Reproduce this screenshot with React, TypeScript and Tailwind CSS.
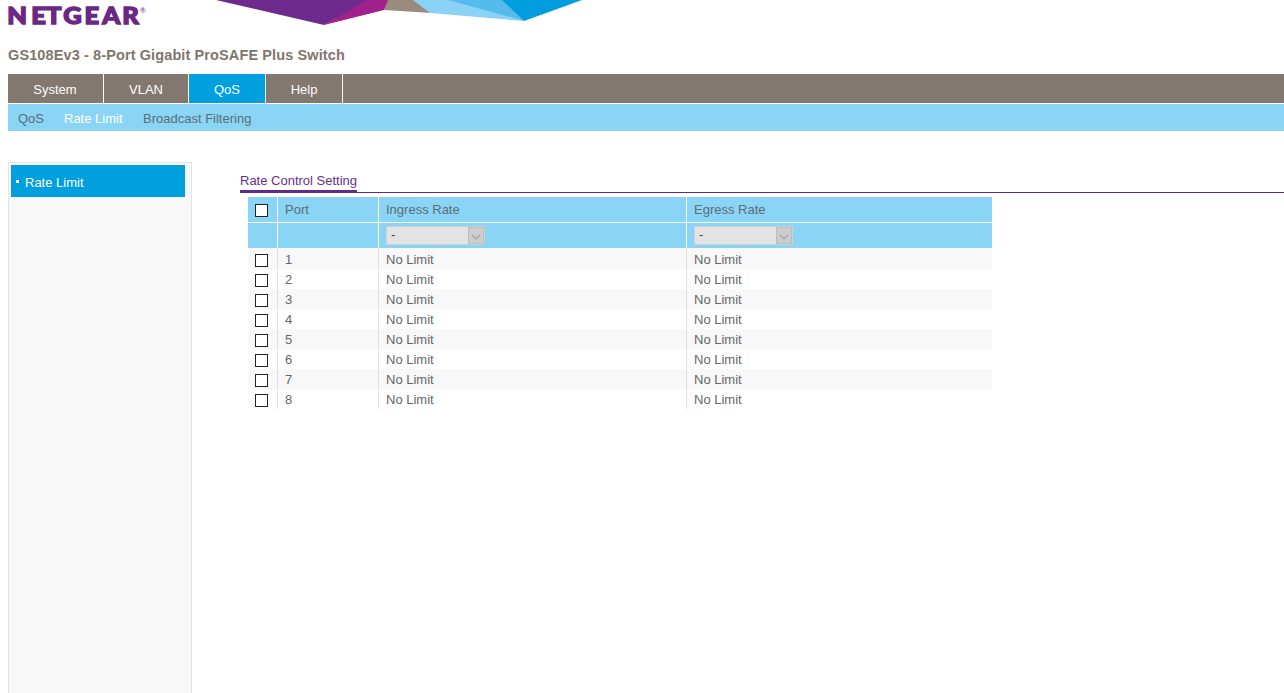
import { useState } from "react";

const TABS = [
  { label: "System", width: "w-[96px] pr-px" },
  { label: "VLAN", width: "w-[85px]" },
  { label: "QoS", width: "w-[77px]" },
  { label: "Help", width: "w-[77px]" },
];

const PORTS = [1, 2, 3, 4, 5, 6, 7, 8];

export default function App() {
  const [selected, setSelected] = useState<number[]>([]);

  function toggle(port: number) {
    setSelected((cur) =>
      cur.includes(port) ? cur.filter((p) => p !== port) : [...cur, port],
    );
  }

  const allSelected = selected.length === PORTS.length;

  return (
    <div className="flex h-[693px] flex-col overflow-hidden bg-white pl-2 font-['Liberation_Sans',Arial,sans-serif] text-[13px] leading-5 text-[#666]">
      <header className="flex h-[74px] flex-col">
        <div className="flex h-[45px] items-start">
          <Logo />
          <Banner />
        </div>
        <h1 className="text-[14.5px] leading-5 font-bold tracking-[0.11px] whitespace-nowrap text-[#80766d]">
          GS108Ev3 - 8-Port Gigabit ProSAFE Plus Switch
        </h1>
      </header>

      <nav className="flex h-[29px] shrink-0 bg-[#83786f] text-white">
        {TABS.map((tab) => (
          <button
            key={tab.label}
            className={`${tab.width} border-r border-white pt-[3px] ${
              tab.label === "QoS" ? "bg-[#00a0df]" : ""
            }`}
          >
            {tab.label}
          </button>
        ))}
      </nav>

      <div className="mt-px flex h-[27px] shrink-0 items-center gap-5 bg-[#8ad4f5] pt-0.5 pl-[10px] text-[#5c6e77]">
        <span className="w-[26px]">QoS</span>
        <span className="w-[59px] whitespace-nowrap text-white">Rate Limit</span>
        <span>Broadcast Filtering</span>
      </div>

      <main className="mt-[31px] flex flex-1">
        <aside className="w-[184px] shrink-0 border border-b-0 border-[#e6e3e6] bg-[#f8f8f8] pt-0.5 pl-0.5">
          <div className="flex h-8 w-[174px] items-center gap-[6px] bg-[#00a0df] pl-[5px] text-white">
            <span className="size-[3px] bg-white" />
            <span className="pt-[3px]">Rate Limit</span>
          </div>
        </aside>

        <section className="ml-12 flex-1 pt-[9px]">
          <div className="flex h-[22px] border-b border-[#5b2d82]">
            <h2 className="h-[22px] w-[117px] border-b-[3px] border-[#5f2c8c] leading-5 whitespace-nowrap text-[#66308f]">
              Rate Control Setting
            </h2>
          </div>

          <table className="mt-1 ml-2 w-[744px] table-fixed border-collapse text-left">
            <colgroup>
              <col className="w-[30px]" />
              <col className="w-[101px]" />
              <col className="w-[308px]" />
              <col className="w-[305px]" />
            </colgroup>
            <thead className="bg-[#8ad4f5] text-[#5c6e77]">
              <tr className="h-[26px] shadow-[inset_0_-1px_0_#fff]">
                <th className="p-0 pl-[7px] shadow-[inset_-1px_0_0_#fff]">
                  <CheckBox
                    checked={allSelected}
                    onChange={() => setSelected(allSelected ? [] : PORTS)}
                  />
                </th>
                <th className="p-0 pl-[7px] font-normal shadow-[inset_-1px_0_0_#fff]">Port</th>
                <th className="p-0 pl-[7px] font-normal shadow-[inset_-1px_0_0_#fff]">Ingress Rate</th>
                <th className="p-0 pl-[7px] font-normal">Egress Rate</th>
              </tr>
              <tr className="h-[25px]">
                <td className="p-0 shadow-[inset_-1px_0_0_#fff]" />
                <td className="p-0 shadow-[inset_-1px_0_0_#fff]" />
                <td className="p-0 pl-[7px] shadow-[inset_-1px_0_0_#fff]">
                  <RateSelect />
                </td>
                <td className="p-0 pl-[7px]">
                  <RateSelect />
                </td>
              </tr>
            </thead>
            <tbody>
              {PORTS.map((port) => (
                <tr key={port} className="h-5 align-bottom leading-[18px] first:h-[21px] odd:bg-[#f8f8f8]">
                  <td className="p-0 pb-0.5 pl-[7px] shadow-[inset_-1px_0_0_#e2dfe0]">
                    <CheckBox
                      checked={selected.includes(port)}
                      onChange={() => toggle(port)}
                    />
                  </td>
                  <td className="p-0 pl-[7px] shadow-[inset_-1px_0_0_#e2dfe0]">{port}</td>
                  <td className="p-0 pl-[7px] shadow-[inset_-1px_0_0_#e2dfe0]">No Limit</td>
                  <td className="p-0 pl-[7px]">No Limit</td>
                </tr>
              ))}
            </tbody>
          </table>
        </section>
      </main>
    </div>
  );
}

interface CheckBoxProps {
  checked: boolean;
  onChange: () => void;
}

function CheckBox({ checked, onChange }: CheckBoxProps) {
  return (
    <input
      type="checkbox"
      checked={checked}
      onChange={onChange}
      className="block size-[13px] appearance-none border border-[#222] bg-white checked:bg-[#5f2c8c]"
    />
  );
}

function RateSelect() {
  return (
    <div className="flex h-[19px] w-[99px] border border-[#cfd0d0] bg-[#e3e3e3]">
      <span className="flex-1 pl-1 leading-4 text-[#444]">-</span>
      <span className="grid w-4 place-items-center border border-[#bdbdbd] bg-[#cdcdcd] pt-0.5">
        <svg viewBox="0 0 10 6" width="10" height="6" fill="none" stroke="#a2a2a2" strokeWidth="1.2">
          <path d="M1 1l4 4 4-4" />
        </svg>
      </span>
    </div>
  );
}

function Logo() {
  return (
    <svg width="142" height="32" viewBox="0 0 142 32" fill="#6a2785" className="shrink-0 font-[Lato,sans-serif]">
      <text
        transform="scale(1.1 1)"
        x="-0.7 21.2 34.5 50.2 69.5 85.7 103.9"
        y="24"
        fontSize="23.2"
        fontWeight="900"
        stroke="#6a2785"
        strokeWidth="1.4"
      >
        NETGEAR
      </text>
      <text x="132" y="13" fontSize="7">®</text>
    </svg>
  );
}

// Faceted ribbon hanging from the top edge
function Banner() {
  return (
    <svg width="370" height="26" viewBox="0 0 370 26" className="ml-[64px] shrink-0">
      <path d="M2 0H158L110 25Z" fill="#6d2a8c" />
      <path d="M154 0H176L170 10 110 25Z" fill="#a31f8c" />
      <path d="M174 0H201L218 13 170 10Z" fill="#998c7e" />
      <path d="M199 0H236L310 21 216 13Z" fill="#8ad3f6" />
      <path d="M234 0H290L310 21Z" fill="#54bbec" />
      <path d="M288 0H368L310 21Z" fill="#009ddf" />
    </svg>
  );
}
